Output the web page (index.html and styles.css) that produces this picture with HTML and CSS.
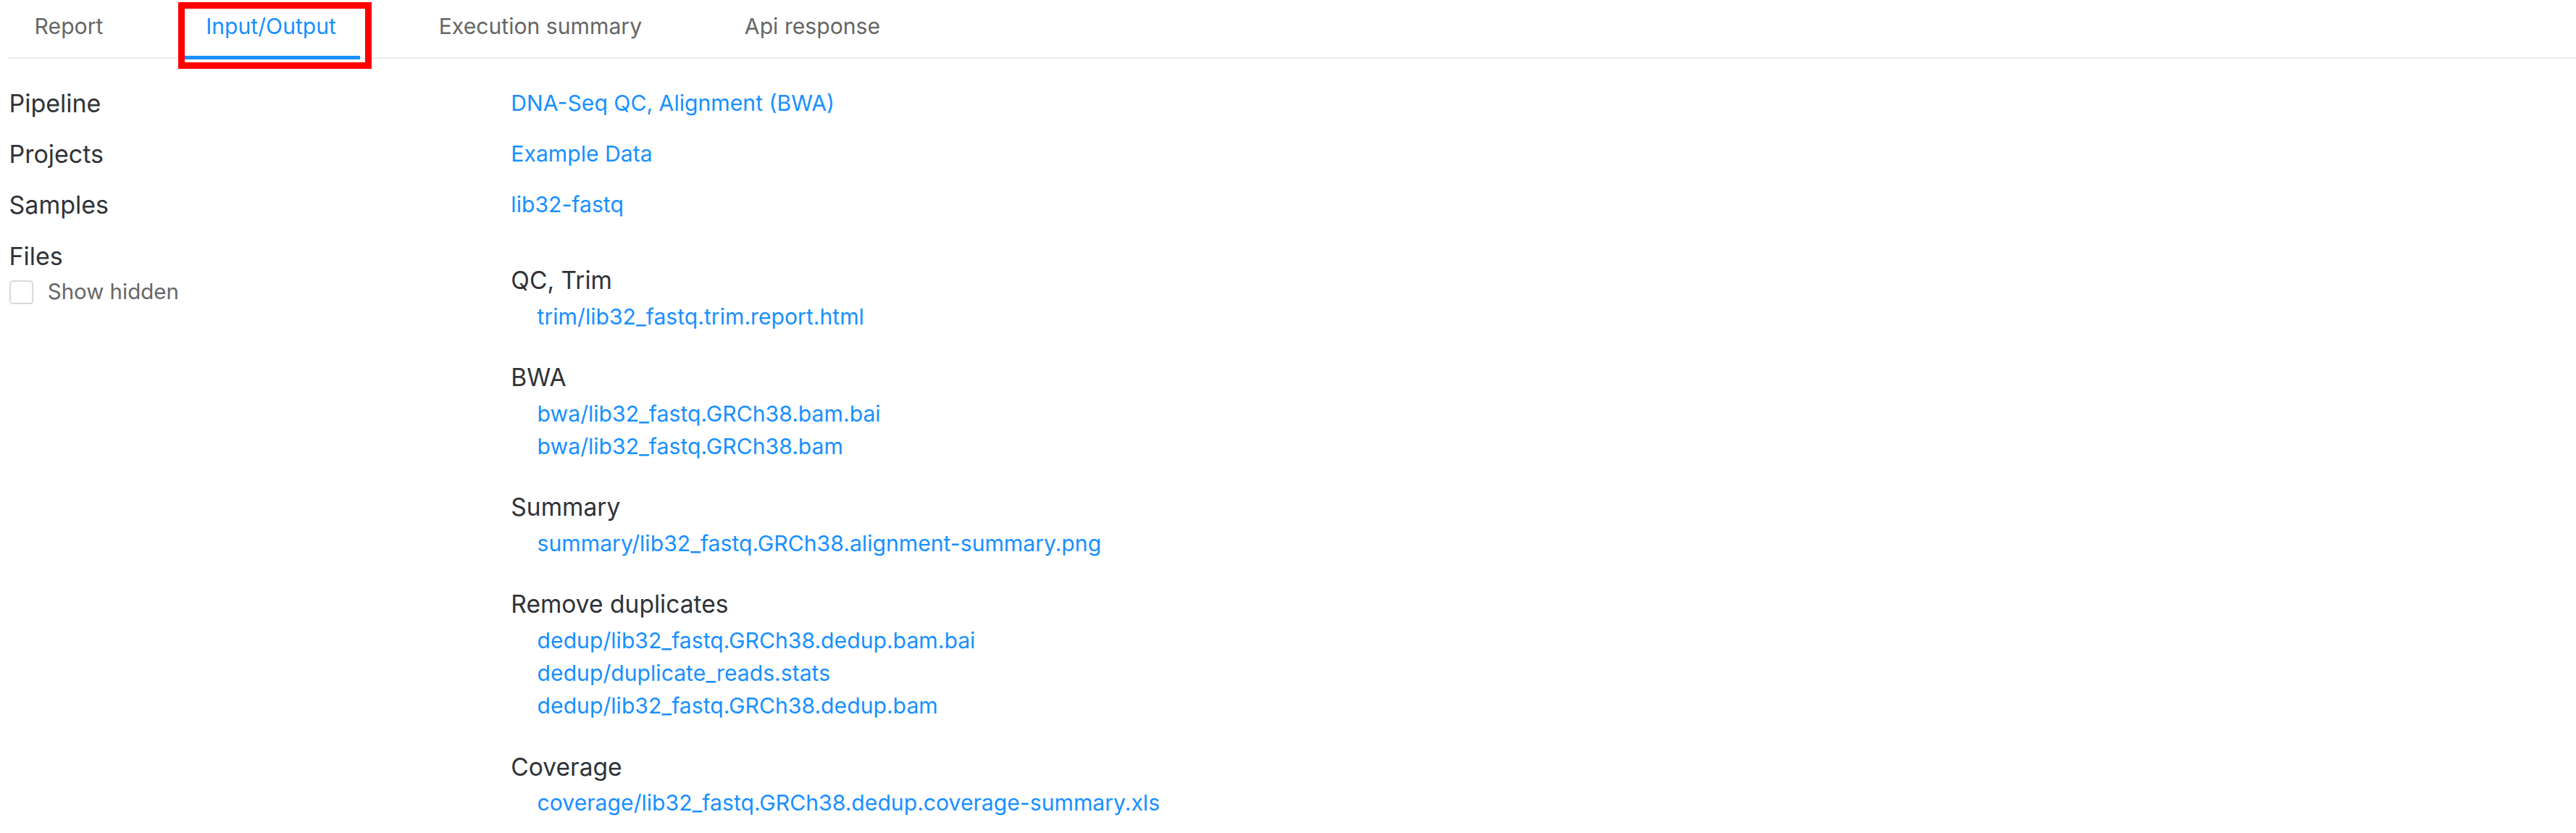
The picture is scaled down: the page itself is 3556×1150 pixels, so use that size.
FILE: index.html
```html
<!DOCTYPE html>
<html lang="en">
<head>
<meta charset="utf-8">
<title>Input/Output</title>
<link rel="stylesheet" href="styles.css">
</head>
<body>
<div class="page">
  <nav class="tabs">
    <div class="tab">Report</div>
    <div class="tab tab-active">Input/Output</div>
    <div class="tab">Execution summary</div>
    <div class="tab">Api response</div>
  </nav>
  <div class="highlight"></div>

  <div class="details">
    <div class="row">
      <div class="label">Pipeline</div>
      <div class="value"><a class="link" href="#">DNA-Seq QC, Alignment (BWA)</a></div>
    </div>
    <div class="row">
      <div class="label">Projects</div>
      <div class="value"><a class="link" href="#">Example Data</a></div>
    </div>
    <div class="row">
      <div class="label">Samples</div>
      <div class="value"><a class="link" href="#">lib32-fastq</a></div>
    </div>
    <div class="row">
      <div class="label">
        <div>Files</div>
        <label class="check"><span class="box"></span><span class="check-text">Show hidden</span></label>
      </div>
      <div class="value files">
        <section class="group">
          <h3 class="group-title">QC, Trim</h3>
          <a class="file" href="#">trim/lib32_fastq.trim.report.html</a>
        </section>
        <section class="group">
          <h3 class="group-title">BWA</h3>
          <a class="file" href="#">bwa/lib32_fastq.GRCh38.bam.bai</a>
          <a class="file" href="#">bwa/lib32_fastq.GRCh38.bam</a>
        </section>
        <section class="group">
          <h3 class="group-title">Summary</h3>
          <a class="file" href="#">summary/lib32_fastq.GRCh38.alignment-summary.png</a>
        </section>
        <section class="group">
          <h3 class="group-title">Remove duplicates</h3>
          <a class="file" href="#">dedup/lib32_fastq.GRCh38.dedup.bam.bai</a>
          <a class="file" href="#">dedup/duplicate_reads.stats</a>
          <a class="file" href="#">dedup/lib32_fastq.GRCh38.dedup.bam</a>
        </section>
        <section class="group">
          <h3 class="group-title">Coverage</h3>
          <a class="file" href="#">coverage/lib32_fastq.GRCh38.dedup.coverage-summary.xls</a>
        </section>
      </div>
    </div>
  </div>
</div>
</body>
</html>
```

FILE: styles.css
```css
html {
  zoom: 2.268;
}
body {
  margin: 0;
  background: #ffffff;
  font-family: Inter, "Noto Sans", sans-serif;
  color: #333333;
}
.page {
  position: relative;
  padding-left: 5.5px;
}
.tabs {
  display: flex;
  border-bottom: 1px solid #ececec;
  height: 35px;
}
.tab {
  position: relative;
  padding: 5.5px 13.5px 7.5px;
  margin-right: 35.5px;
  font-size: 13.3px;
  line-height: 22px;
  color: #666666;
  white-space: nowrap;
}
.tab:first-child {
  margin-left: 2px;
}
.tab-active {
  color: #1890ff;
}
.tab-active::after {
  content: "";
  position: absolute;
  left: 0;
  right: -1px;
  bottom: -1px;
  height: 2px;
  background: #1890ff;
}
.highlight {
  position: absolute;
  left: 108.5px;
  top: 1.3px;
  width: 117.7px;
  height: 40.6px;
  box-sizing: border-box;
  border: 4.2px solid #ff0000;
}
.details {
  padding-top: 11.5px;
}
.row {
  display: grid;
  grid-template-columns: 305.5px 1fr;
  padding: 4.5px 0;
}
.label {
  font-size: 15px;
  line-height: 22px;
  color: #303338;
}
.value {
  font-size: 13.3px;
  line-height: 22px;
}
.link,
.file {
  color: #1890ff;
  text-decoration: none;
}
.check {
  display: flex;
  align-items: center;
  height: 22px;
}
.box {
  width: 14.5px;
  height: 14.5px;
  box-sizing: border-box;
  border: 1px solid #d9d9d9;
  border-radius: 2px;
  background: #ffffff;
  margin-left: 0.3px;
}
.check-text {
  margin-left: 8.7px;
  font-size: 13px;
  color: #666666;
}
.files {
  padding-top: 14px;
}
.group {
  display: flex;
  flex-direction: column;
  margin-bottom: 15px;
}
.group-title {
  margin: 0;
  font-size: 14.8px;
  font-weight: 400;
  line-height: 24px;
  color: #303338;
}
.file {
  padding-left: 16px;
  font-size: 13.3px;
  line-height: 20px;
  align-self: flex-start;
}
```
